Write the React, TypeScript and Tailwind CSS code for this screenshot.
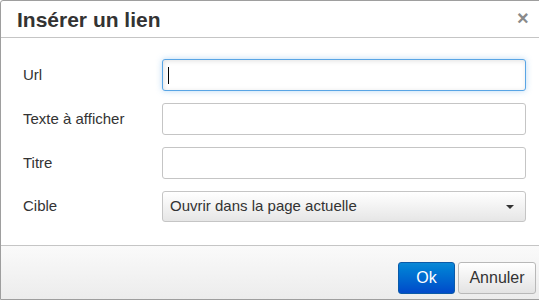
export default function App() {
  const rows = ["Url", "Texte à afficher", "Titre"];
  return (
    <div className="w-[539px] h-[302px] overflow-hidden bg-white font-['Liberation_Sans',Arial,sans-serif]">
      <div className="w-[560px] h-[300px] flex flex-col border border-[#9e9e9e] rounded-tl-[3px] bg-white">
        {/* header */}
        <div className="h-[37px] shrink-0 flex items-center border-b border-[#c5c5c5] relative">
          <h1 className="pl-[16px] text-[21px] font-bold text-[#333] leading-none">Insérer un lien</h1>
          <span className="absolute left-[516px] top-[7px] text-[20px] font-bold text-[#8a8a8a] leading-none">×</span>
        </div>

        {/* body */}
        <div className="flex-1 flex flex-col gap-[12px] pt-[21px]">
          {rows.map((label, i) => (
            <div key={label} className="flex items-center">
              <label className="w-[161px] pl-[22px] text-[15px] text-[#333]">{label}</label>
              <div
                className={
                  i === 0
                    ? "w-[364px] h-[32px] rounded-[3px] border border-[#59a5e5] bg-white shadow-[inset_1px_1px_5px_rgba(0,0,0,0.12),0_0_6px_rgba(89,165,229,0.4)] flex items-center pl-[5px]"
                    : "w-[364px] h-[32px] rounded-[3px] border border-[#c5c5c5] bg-white"
                }
              >
                {i === 0 && <span className="w-[1px] h-[17px] bg-black" />}
              </div>
            </div>
          ))}
          <div className="flex items-center">
            <label className="w-[161px] pl-[22px] text-[15px] text-[#333]">Cible</label>
            <div className="w-[364px] h-[31px] rounded-[3px] border border-[#c5c5c5] bg-gradient-to-b from-white to-[#e6e6e6] flex items-center justify-between pl-[7px] pr-[11px]">
              <span className="text-[15px] text-[#333]">Ouvrir dans la page actuelle</span>
              <span className="w-0 h-0 border-l-[4px] border-r-[4px] border-t-[4px] border-l-transparent border-r-transparent border-t-[#333]" />
            </div>
          </div>
        </div>

        {/* footer */}
        <div className="h-[54px] shrink-0 border-t border-[#c5c5c5] bg-gradient-to-b from-[#fafafa] to-[#ececec] flex items-center pl-[397px] gap-[3px]">
          <button className="w-[57px] h-[32px] mt-[10px] rounded-[3px] border border-[#0a5aa8] bg-gradient-to-b from-[#0a88d6] to-[#0349c9] text-white text-[16px]">
            Ok
          </button>
          <button className="w-[78px] h-[32px] mt-[10px] rounded-[3px] border border-[#b8b8b8] bg-gradient-to-b from-white to-[#e3e3e3] text-[#333] text-[16px]">
            Annuler
          </button>
        </div>
      </div>
    </div>
  );
}
